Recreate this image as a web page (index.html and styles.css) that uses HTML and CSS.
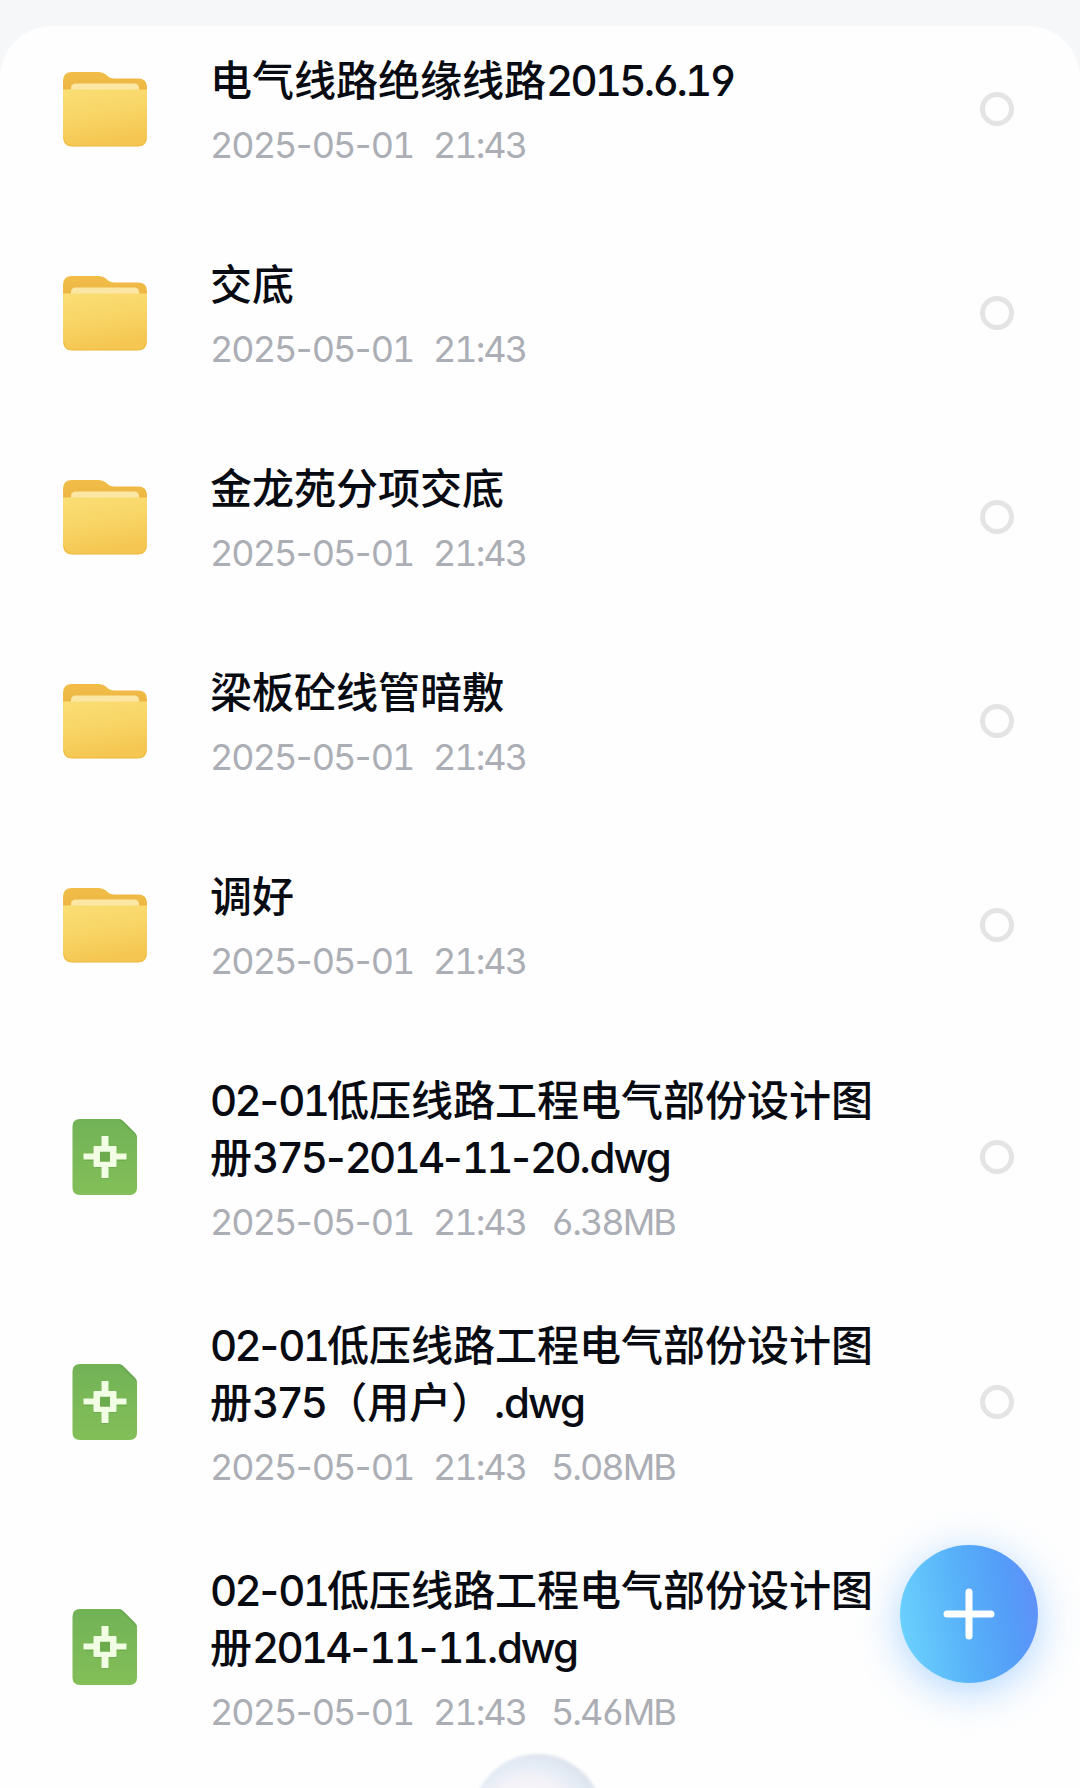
FILE: index.html
```html
<!DOCTYPE html>
<html lang="zh-CN">
<head>
    <meta charset="UTF-8">
    <meta name="viewport" content="width=device-width, initial-scale=1.0">
    <title>文件列表</title>
    <link rel="stylesheet" href="styles.css">
</head>
<body>
    <!-- Shared icons -->
    <svg class="sprite" width="0" height="0">
        <defs>
            <linearGradient id="folderBack" x1="0" y1="0" x2="0" y2="1">
                <stop offset="0" stop-color="#f1bd48"/>
                <stop offset="1" stop-color="#e9ae3c"/>
            </linearGradient>
            <linearGradient id="folderFront" x1="0" y1="0" x2="0.25" y2="1">
                <stop offset="0" stop-color="#fade75"/>
                <stop offset="0.5" stop-color="#f8d566"/>
                <stop offset="1" stop-color="#f5c651"/>
            </linearGradient>
            <linearGradient id="fileGreen" x1="0" y1="0" x2="0" y2="1">
                <stop offset="0" stop-color="#72b257"/>
                <stop offset="1" stop-color="#83bf58"/>
            </linearGradient>
        </defs>
        <symbol id="folder" viewBox="0 0 86 76">
            <path d="M1 10Q1 1 10 1H37Q41 1 44 3.5L46 5.5Q48.500 7.500 52 7.500H76Q85 7.500 85 16V40H1Z" fill="url(#folderBack)"/>
            <path d="M9 22V17Q9 12.500 14 12.500H72Q77 12.500 77 17V22Z" fill="#fbe6a4"/>
            <path d="M1 18.500H85V66Q85 75.500 76 75.500H10Q1 75.500 1 66Z" fill="url(#folderFront)"/>
            <path d="M2 67Q3 74.700 10 74.700H76Q83 74.700 84 67" fill="none" stroke="#efbe4b" stroke-width="1.200"/>
        </symbol>
        <symbol id="dwg" viewBox="0 0 66 78">
            <path d="M8 1H46.500Q49 1 51 3L63 15Q65 17 65 19.500V69.500Q65 77 57.500 77H8Q.500 77 .500 69.500V8.500Q.500 1 8 1Z" fill="url(#fileGreen)"/>
            <path d="M47 1.200Q49.500 1.500 51 3L63 15Q64.800 17 65 19.500Z" fill="#6aa852"/>
            <path d="M29.500 20h7v10h7q1 0 1 1v6h10v6h-10v6q0 1-1 1h-7v11h-7v-11h-7q-1 0-1-1v-6h-10v-6h10v-6q0-1 1-1h7z" fill="#4c8d36" opacity=".3"/>
            <path fill-rule="evenodd" d="M29.500 18h7v10h7q1 0 1 1v6.500h10v6h-10v6.500q0 1-1 1h-7v11h-7v-11h-7q-1 0-1-1v-6.500h-10v-6h10v-6.500q0-1 1-1h7zM28 33.800v10h10v-10z" fill="#f1fee4"/>
        </symbol>
    </svg>

    <main class="card">
        <div class="item folder">
            <svg class="icon folder-icon"><use href="#folder"/></svg>
            <div class="info">
                <h2 class="name">电气线路绝缘线路<span class="num">2015.6.19</span></h2>
                <p class="meta"><span class="date">2025<i>-</i>05<i>-</i>01</span><span class="time">21:43</span></p>
            </div>
            <span class="check"></span>
        </div>
        <div class="item folder">
            <svg class="icon folder-icon"><use href="#folder"/></svg>
            <div class="info">
                <h2 class="name">交底</h2>
                <p class="meta"><span class="date">2025<i>-</i>05<i>-</i>01</span><span class="time">21:43</span></p>
            </div>
            <span class="check"></span>
        </div>
        <div class="item folder">
            <svg class="icon folder-icon"><use href="#folder"/></svg>
            <div class="info">
                <h2 class="name">金龙苑分项交底</h2>
                <p class="meta"><span class="date">2025<i>-</i>05<i>-</i>01</span><span class="time">21:43</span></p>
            </div>
            <span class="check"></span>
        </div>
        <div class="item folder">
            <svg class="icon folder-icon"><use href="#folder"/></svg>
            <div class="info">
                <h2 class="name">梁板砼线管暗敷</h2>
                <p class="meta"><span class="date">2025<i>-</i>05<i>-</i>01</span><span class="time">21:43</span></p>
            </div>
            <span class="check"></span>
        </div>
        <div class="item folder">
            <svg class="icon folder-icon"><use href="#folder"/></svg>
            <div class="info">
                <h2 class="name">调好</h2>
                <p class="meta"><span class="date">2025<i>-</i>05<i>-</i>01</span><span class="time">21:43</span></p>
            </div>
            <span class="check"></span>
        </div>
        <div class="item file">
            <svg class="icon file-icon"><use href="#dwg"/></svg>
            <div class="info">
                <h2 class="name"><span class="num">02<i>-</i>01</span>低压线路工程电气部份设计图<br>册<span class="num">375<i>-</i>2014<i>-</i>11<i>-</i>20</span><span class="ext">.dwg</span></h2>
                <p class="meta"><span class="date">2025<i>-</i>05<i>-</i>01</span><span class="time">21:43</span><span class="size">6.38MB</span></p>
            </div>
            <span class="check"></span>
        </div>
        <div class="item file">
            <svg class="icon file-icon"><use href="#dwg"/></svg>
            <div class="info">
                <h2 class="name"><span class="num">02<i>-</i>01</span>低压线路工程电气部份设计图<br>册<span class="num">375</span>（用户）<span class="ext">.dwg</span></h2>
                <p class="meta"><span class="date">2025<i>-</i>05<i>-</i>01</span><span class="time">21:43</span><span class="size">5.08MB</span></p>
            </div>
            <span class="check"></span>
        </div>
        <div class="item file">
            <svg class="icon file-icon"><use href="#dwg"/></svg>
            <div class="info">
                <h2 class="name"><span class="num">02<i>-</i>01</span>低压线路工程电气部份设计图<br>册<span class="num">2014<i>-</i>11<i>-</i>11</span><span class="ext">.dwg</span></h2>
                <p class="meta"><span class="date">2025<i>-</i>05<i>-</i>01</span><span class="time">21:43</span><span class="size">5.46MB</span></p>
            </div>
        </div>
    </main>

    <button class="add" aria-label="添加">
        <svg width="52" height="52" viewBox="0 0 52 52"><path d="M26 4V48M4 26H48" stroke="#fff" stroke-width="7" stroke-linecap="round"/></svg>
    </button>
    <div class="dock"><div class="orb"></div></div>
</body>
</html>
```
FILE: styles.css
```css
* {
    margin: 0;
    padding: 0;
    box-sizing: border-box;
}

body {
    height: 1788px;
    padding-top: 26px;
    overflow: hidden;
    position: relative;
    background-color: #f6f7f9;
    font-family: Inter, "Noto Sans CJK SC", sans-serif;
}

.sprite {
    position: absolute;
}

.card {
    height: 1762px;
    padding: 26px 66px 0 62px;
    overflow: hidden;
    background-color: #fefefe;
    border-radius: 52px 52px 0 0;
}

.item {
    display: flex;
    align-items: center;
    margin-bottom: 75px;
}

.item:last-child {
    margin-bottom: 0;
}

.item.folder {
    margin-bottom: 91px;
}

.icon {
    flex: none;
    display: block;
}

.folder-icon {
    width: 86px;
    height: 76px;
    margin-right: 62px;
}

.file-icon {
    width: 66px;
    height: 78px;
    margin: 0 72px 0 10px;
}

.info {
    flex: 1;
}

.name {
    font-size: 42px;
    font-weight: 500;
    line-height: 57px;
    color: #080b12;
    white-space: nowrap;
}

.num {
    font-feature-settings: "tnum", "cv03", "cv04";
    letter-spacing: -2.8px;
}

.ext {
    letter-spacing: -2px;
}

.name i, .meta i {
    font-style: normal;
    margin: 0 -2px 0 -3px;
}

.meta {
    display: flex;
    height: 40px;
    margin-top: 16px;
    font-size: 36px;
    line-height: 40px;
    color: #abaeb5;
    white-space: nowrap;
    font-feature-settings: "tnum", "cv03", "cv04";
    letter-spacing: -2px;
}

.date {
    width: 223px;
}

.time {
    width: 118px;
}

.check {
    flex: none;
    width: 34px;
    height: 34px;
    border: 5px solid #e4e4e4;
    border-radius: 50%;
}

.add {
    position: absolute;
    left: 900px;
    top: 1545px;
    width: 138px;
    height: 138px;
    display: flex;
    align-items: center;
    justify-content: center;
    border: none;
    border-radius: 50%;
    background: linear-gradient(80deg, #6bd2fd 5%, #58b2f9 45%, #549df8 75%, #638df8 100%);
    box-shadow: 0 8px 40px rgba(80, 165, 255, 0.45);
    cursor: pointer;
}

/* assistant bubble, mostly below the fold */
.dock {
    position: absolute;
    left: 440px;
    bottom: 0;
    width: 200px;
    height: 48px;
    overflow: hidden;
}

.orb {
    width: 131px;
    height: 131px;
    margin: 14px 0 0 32px;
    border-radius: 50%;
    background: radial-gradient(circle at 44% 56%, #fcf5f5 0, #f5f3f8 45%, #e3ebf5 62%, #dbe1ea 76%);
    filter: blur(1.5px);
}
```
